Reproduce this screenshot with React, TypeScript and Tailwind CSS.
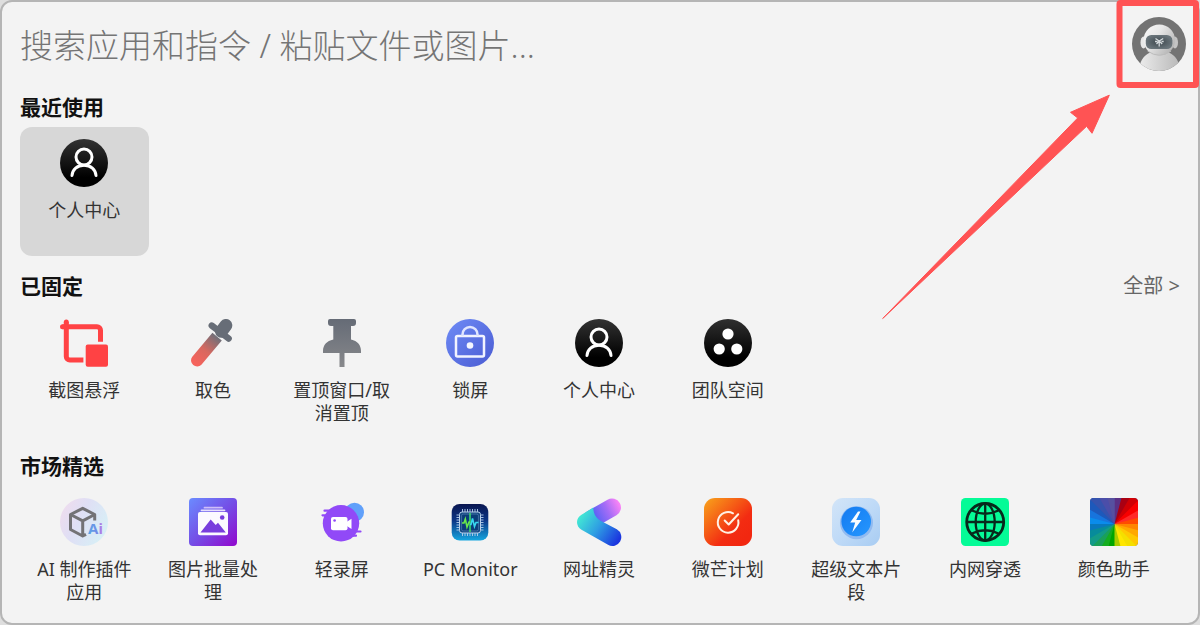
import type { ReactNode } from "react";

type AppItem = { name: string; icon: ReactNode };

function Svg({ children }: { children: ReactNode }) {
  return (
    <svg viewBox="0 0 48 48" className="size-12 shrink-0" fill="none" aria-hidden="true">
      {children}
    </svg>
  );
}

function UserIcon({ id }: { id: string }) {
  return (
    <Svg>
      <linearGradient id={id} x1="0" y1="0" x2="0" y2="1">
        <stop stopColor="#333" />
        <stop offset="0.8" stopColor="#000" />
      </linearGradient>
      <circle cx="24" cy="24" r="24" fill={`url(#${id})`} />
      <g stroke="#fff" strokeWidth="3" strokeLinecap="round">
        <circle cx="24" cy="18" r="8" />
        <path d="M12 36.5C12.4 30.5 17.2 26.2 24 26.2s11.6 4.3 12 10.3" />
      </g>
    </Svg>
  );
}

function CropIcon() {
  return (
    <Svg>
      <g stroke="#ff4244" strokeWidth="5">
        <path d="M2.5 7.7H37a3.5 3.5 0 0 1 3.5 3.5v11.6" />
        <path d="M6.3 3v34.5a3.5 3.5 0 0 0 3.5 3.5h13.6" />
      </g>
      <circle cx="2.5" cy="7.7" r="2.5" fill="#ff4244" />
      <circle cx="6.3" cy="3" r="2.5" fill="#ff4244" />
      <rect x="25.7" y="25.5" width="22.3" height="22.3" rx="2" fill="#ff4244" />
    </Svg>
  );
}

function DropperIcon() {
  return (
    <Svg>
      <linearGradient id="dropper" gradientUnits="userSpaceOnUse" x1="29" y1="17" x2="7" y2="44">
        <stop stopColor="#6a707a" />
        <stop offset="0.55" stopColor="#d8685f" />
        <stop offset="1" stopColor="#f5635c" />
      </linearGradient>
      <path d="M23.4 13.8 32.8 21.6 12.4 45.8A6.1 6.1 0 0 1 3.1 38Z" fill="url(#dropper)" />
      <path d="m22.8 6.6 16.8 12.9" stroke="#676d77" strokeWidth="6.5" strokeLinecap="round" />
      <path d="m36.9 6.4-4.5 6" stroke="#676d77" strokeWidth="12.8" strokeLinecap="round" />
    </Svg>
  );
}

function PinIcon() {
  return (
    <Svg>
      <linearGradient id="pin" x1="0" y1="0" x2="0" y2="1">
        <stop stopColor="#656b76" />
        <stop offset="1" stopColor="#87888b" />
      </linearGradient>
      <path
        d="M12 0h24a2 2 0 0 1 2 2v2a3 3 0 0 1-3 3h-2v13.5c6.5 1.5 10 5.5 10 11.5v2H26.5v14h-5V34H5v-2c0-6 3.8-10 10.3-11.500V7H13a3 3 0 0 1-3-3V2a2 2 0 0 1 2-2Z"
        fill="url(#pin)"
      />
    </Svg>
  );
}

function LockIcon() {
  return (
    <Svg>
      <linearGradient id="lock" x1="0" y1="0" x2="1" y2="1">
        <stop stopColor="#6e8bf6" />
        <stop offset="1" stopColor="#4a5bd2" />
      </linearGradient>
      <circle cx="24" cy="24" r="24" fill="url(#lock)" />
      <rect x="10" y="17" width="28" height="20.5" rx="1.5" stroke="#f1f3ff" strokeWidth="2.5" />
      <path d="M16.5 17v-1.5a7.5 7.5 0 0 1 15 0V17" stroke="#dfe5ff" strokeWidth="2.5" />
      <circle cx="24" cy="26.5" r="3.3" fill="#f4f6ff" />
    </Svg>
  );
}

function TeamIcon() {
  return (
    <Svg>
      <linearGradient id="team" x1="0" y1="0" x2="0" y2="1">
        <stop stopColor="#303030" />
        <stop offset="0.8" stopColor="#000" />
      </linearGradient>
      <circle cx="24" cy="24" r="24" fill="url(#team)" />
      <g fill="#fff">
        <circle cx="24" cy="15" r="5.6" />
        <circle cx="15.2" cy="30" r="5.6" />
        <circle cx="32.8" cy="30" r="5.6" />
      </g>
    </Svg>
  );
}

function AiBoxIcon() {
  return (
    <Svg>
      <linearGradient id="aiBg" x1="0" y1="0" x2="1" y2="0.5">
        <stop stopColor="#f2dcec" />
        <stop offset="0.5" stopColor="#dfdff5" />
        <stop offset="1" stopColor="#d8eef6" />
      </linearGradient>
      <linearGradient id="aiText" x1="0" y1="0" x2="1" y2="0">
        <stop stopColor="#58a6e4" />
        <stop offset="0.6" stopColor="#718ce8" />
        <stop offset="1" stopColor="#c57be4" />
      </linearGradient>
      <circle cx="24" cy="24" r="24" fill="url(#aiBg)" />
      <path
        d="M34.7 22.5V16.5L22.7 10.3 10.5 16.5V31.5L22.7 38l3.3-1.7M10.5 16.5l12.2 6.3 12-6.3M22.7 22.8V38"
        stroke="#737276"
        strokeWidth="3"
        strokeLinejoin="round"
      />
      <text x="28" y="36" fontSize="15" fontWeight="700" fontFamily="Noto Sans, sans-serif" fill="url(#aiText)">
        Ai
      </text>
    </Svg>
  );
}

function PictureIcon() {
  return (
    <Svg>
      <linearGradient id="picture" x1="0" y1="0" x2="1" y2="1">
        <stop stopColor="#6b8cff" />
        <stop offset="0.5" stopColor="#744ee6" />
        <stop offset="1" stopColor="#9206cd" />
      </linearGradient>
      <rect width="48" height="48" rx="4" fill="url(#picture)" />
      <path d="M15.5 9.7h17.5" stroke="#cdbef8" strokeWidth="1.8" strokeLinecap="round" />
      <path d="M12.5 12.3h23" stroke="#e6dffc" strokeWidth="1.8" strokeLinecap="round" />
      <rect x="9" y="14" width="30" height="23.3" rx="2" fill="#fbf9ff" />
      <path d="m11.5 34.5 10.2-13 5 5.5 2.3-2.2 7.8 9.7Z" fill="#783ddd" />
      <circle cx="33.2" cy="19.5" r="2.3" fill="#783ddd" />
    </Svg>
  );
}

function RecorderIcon() {
  return (
    <Svg>
      <circle cx="36.5" cy="14.3" r="9.5" fill="#60a0fa" />
      <circle cx="23" cy="25.3" r="18.2" fill="#9149f7" />
      <path
        d="M6.5 12.7h5M4.5 17.3h5M36 33.5h6.5M34 37.7h4"
        stroke="#9149f7"
        strokeWidth="2.2"
        strokeLinecap="round"
      />
      <rect x="13" y="19" width="16.5" height="13.3" rx="2" fill="#fff" />
      <path d="m28.5 24 5-3.3V31l-5-3.3Z" fill="#fff" />
      <circle cx="16.6" cy="22.5" r="1.3" fill="#9149f7" />
    </Svg>
  );
}

function MonitorIcon() {
  return (
    <Svg>
      <linearGradient id="monitor" x1="0" y1="0" x2="0" y2="1">
        <stop stopColor="#0a1650" />
        <stop offset="0.45" stopColor="#0b3585" />
        <stop offset="1" stopColor="#15a6df" />
      </linearGradient>
      <rect x="5.7" y="6" width="36.6" height="36.6" rx="8" fill="url(#monitor)" />
      <g stroke="#b6cfea" strokeWidth="0.9">
        <path d="M16.500 14v-3m2.500 3v-3m2.500 3v-3m2.500 3v-3m2.500 3v-3m2.500 3v-3m2.500 3v-3M16.500 35v3m2.500-3v3m2.500-3v3m2.500-3v3m2.500-3v3m2.500-3v3m2.500-3v3" />
        <path d="M13.500 17h-3m3 2.500h-3m3 2.500h-3m3 2.500h-3m3 2.500h-3m3 2.500h-3m3 2.500h-3M34.500 17h3m-3 2.500h3m-3 2.500h3m-3 2.500h3m-3 2.500h3m-3 2.500h3m-3 2.500h3" />
      </g>
      <rect x="13.5" y="14" width="21" height="21" rx="2.5" fill="#154781" stroke="#b6cfea" strokeWidth="1" />
      <rect x="15.6" y="16.1" width="16.8" height="16.8" rx="1.5" fill="#0b3c78" stroke="#719bc8" strokeWidth="0.5" />
      <path d="M24 15v19" stroke="#39d96d" strokeWidth="1.6" />
      <path d="M16 25h2l1.3-4 1.7 8 2-5h1" stroke="#69e94b" strokeWidth="1.6" />
      <path d="M24 26.5h1l1.5-6 2 8 1.5-4h2.5" stroke="#39d6ee" strokeWidth="1.6" />
    </Svg>
  );
}

function ArrowFoldIcon() {
  return (
    <Svg>
      <linearGradient id="foldTop" gradientUnits="userSpaceOnUse" x1="20" y1="18" x2="45" y2="5">
        <stop stopColor="#5b61f5" />
        <stop offset="0.5" stopColor="#a56df6" />
        <stop offset="1" stopColor="#ff85f7" />
      </linearGradient>
      <linearGradient id="foldLow" gradientUnits="userSpaceOnUse" x1="4" y1="16" x2="43" y2="43">
        <stop stopColor="#44efd3" />
        <stop offset="0.5" stopColor="#2e9de3" />
        <stop offset="1" stopColor="#1b35df" />
      </linearGradient>
      <path d="M37 9.5 16 21.5" stroke="url(#foldTop)" strokeWidth="18" strokeLinecap="round" />
      <path
        d="M18.2 9.6C18.5 16 21 21 28.5 24.2L41.8 31.3A8.9 8.9 0 0 1 33 46.8L6.5 31.8Q2 29 2 24.3T6.5 16.8Z"
        fill="url(#foldLow)"
      />
    </Svg>
  );
}

function PlanIcon() {
  return (
    <Svg>
      <linearGradient id="plan" x1="0" y1="0" x2="0.85" y2="0.85">
        <stop stopColor="#f8a51b" />
        <stop offset="0.75" stopColor="#f32c12" />
        <stop offset="1" stopColor="#f22710" />
      </linearGradient>
      <rect width="48" height="48" rx="11" fill="url(#plan)" />
      <g stroke="#fff1e5" strokeWidth="2" strokeLinecap="round" strokeLinejoin="round">
        <path d="M29 15.3a10.3 10.3 0 1 0 5.2 7" />
        <path d="m20.7 22.5 4 4 9.500-10.2" />
      </g>
    </Svg>
  );
}

function BoltIcon() {
  return (
    <Svg>
      <linearGradient id="boltBg" x1="0" y1="0" x2="1" y2="1">
        <stop stopColor="#d3e5f8" />
        <stop offset="0.55" stopColor="#bdd9f7" />
        <stop offset="1" stopColor="#a8ccf2" />
      </linearGradient>
      <linearGradient id="boltFace" x1="0" y1="0" x2="1" y2="1">
        <stop stopColor="#147af0" />
        <stop offset="1" stopColor="#2697ff" />
      </linearGradient>
      <rect width="48" height="48" rx="11" fill="url(#boltBg)" />
      <circle cx="24.5" cy="24.7" r="16.5" fill="#91baf0" />
      <circle cx="24.2" cy="23.5" r="14.8" fill="url(#boltFace)" />
      <path d="m26 13.5-7.8 11h5l-3 10L29.5 22h-5.3l4.3-8.5Z" fill="#fafdff" />
    </Svg>
  );
}

function GlobeIcon() {
  return (
    <Svg>
      <rect width="48" height="48" rx="4.5" fill="#05fb97" />
      <g stroke="#07291c" strokeWidth="2.3">
        <circle cx="24.2" cy="24" r="18.5" strokeWidth="2.8" />
        <ellipse cx="24.2" cy="24" rx="9.5" ry="18.5" />
        <path d="M24.2 5.5v37M5.7 24h37M11 12.5q13.2 6.5 26.4 0M11 35.5q13.2-6.5 26.4 0" />
      </g>
    </Svg>
  );
}

const wheel = [
  "#5b3085", "#a90012", "#cf0004", "#f80000", "#ff2929", "#ff4b00",
  "#ff8500", "#ffa800", "#ffc800", "#f4df00", "#ffe600", "#a8cc00",
  "#00a500", "#15ad20", "#1aa05a", "#139a88", "#078b9b", "#0878bd",
  "#0a8cec", "#1774dd", "#1d59bb", "#3553ae", "#4b4ea9", "#5650a0",
];

// Each wedge runs under the next one, so no seam shows between them.
function wedge(index: number) {
  const step = (Math.PI * 2) / wheel.length;
  const point = (angle: number) => `${24.5 + 40 * Math.sin(angle)} ${26 - 40 * Math.cos(angle)}`;
  const overlap = index === wheel.length - 1 ? 0 : step / 2;
  return `M24.5 26L${point(index * step)}L${point((index + 1) * step + overlap)}Z`;
}

function ColorWheelIcon() {
  return (
    <Svg>
      <clipPath id="wheelClip">
        <rect width="48" height="48" rx="4" />
      </clipPath>
      <g clipPath="url(#wheelClip)">
        <rect width="48" height="48" fill="#5650a0" />
        {wheel.map((color, i) => (
          <path key={color} d={wedge(i)} fill={color} />
        ))}
      </g>
    </Svg>
  );
}

function Avatar() {
  return (
    <svg viewBox="0 0 54 54" className="size-[54px]" fill="none" aria-hidden="true">
      <clipPath id="avatarClip">
        <circle cx="27" cy="27" r="27" />
      </clipPath>
      <linearGradient id="robot" x1="0" y1="0" x2="1" y2="0.7">
        <stop stopColor="#fafafa" />
        <stop offset="0.45" stopColor="#e7e7e7" />
        <stop offset="1" stopColor="#b4b4b4" />
      </linearGradient>
      <linearGradient id="robotBody" x1="0" y1="0" x2="1" y2="0">
        <stop stopColor="#ececec" />
        <stop offset="1" stopColor="#b8b8b8" />
      </linearGradient>
      <radialGradient id="visor">
        <stop stopColor="#3d474d" />
        <stop offset="1" stopColor="#69747a" />
      </radialGradient>
      <g clipPath="url(#avatarClip)">
        <rect width="54" height="54" fill="#737373" />
        <path d="M7 54c0-9 5-16 11-18.500h19C43 38 48 45 48 54Z" fill="url(#robotBody)" />
        <ellipse cx="11.5" cy="25.5" rx="3" ry="6" fill="#e8e8e8" />
        <ellipse cx="43" cy="25.5" rx="3" ry="6" fill="#c4c4c4" />
        <ellipse cx="27.3" cy="23" rx="15.7" ry="15.5" fill="url(#robot)" />
        <path d="M15.5 34q11.8 8.5 23.6 0" stroke="#bcbcbc" strokeWidth="1" />
        <rect x="13.8" y="18" width="26.6" height="14" rx="5.5" fill="url(#visor)" />
        <path
          d="M23.5 21.5l3.7 2.5 4-2.5M24.5 27l2.7-3 3 3M27.2 24v5.5M23 24.5h2.5M29.5 24.5h2.2"
          stroke="#d5dadd"
          strokeWidth="1.3"
        />
      </g>
    </svg>
  );
}

const recent: AppItem[] = [{ name: "个人中心", icon: <UserIcon id="userRecent" /> }];

const pinned: AppItem[] = [
  { name: "截图悬浮", icon: <CropIcon /> },
  { name: "取色", icon: <DropperIcon /> },
  { name: "置顶窗口/取消置顶", icon: <PinIcon /> },
  { name: "锁屏", icon: <LockIcon /> },
  { name: "个人中心", icon: <UserIcon id="userPinned" /> },
  { name: "团队空间", icon: <TeamIcon /> },
];

const market: AppItem[] = [
  { name: "AI 制作插件应用", icon: <AiBoxIcon /> },
  { name: "图片批量处理", icon: <PictureIcon /> },
  { name: "轻录屏", icon: <RecorderIcon /> },
  { name: "PC Monitor", icon: <MonitorIcon /> },
  { name: "网址精灵", icon: <ArrowFoldIcon /> },
  { name: "微芒计划", icon: <PlanIcon /> },
  { name: "超级文本片段", icon: <BoltIcon /> },
  { name: "内网穿透", icon: <GlobeIcon /> },
  { name: "颜色助手", icon: <ColorWheelIcon /> },
];

function Section({
  title,
  items,
  selected = -1,
  action,
}: {
  title: string;
  items: AppItem[];
  selected?: number;
  action?: ReactNode;
}) {
  return (
    <section className="px-[18px]">
      <div className="flex h-[51px] items-center justify-between pt-2.5">
        <h2 className="text-[21px] leading-7 font-bold text-[#111]">{title}</h2>
        {action}
      </div>
      <ul className="grid grid-cols-9 pr-0.5">
        {items.map((item, i) => (
          <li key={item.name} className="aspect-square">
            <button
              type="button"
              className={
                i === selected
                  ? "flex size-full flex-col items-center rounded-xl bg-[#d7d7d7] px-3 pt-3"
                  : "flex size-full flex-col items-center rounded-xl px-3 pt-3 hover:bg-[#e6e6e6]"
              }
            >
              {item.icon}
              <span className="mt-3 text-[18px] leading-[23px] text-[#333]">{item.name}</span>
            </button>
          </li>
        ))}
      </ul>
    </section>
  );
}

export default function App() {
  return (
    <div className="relative bg-[#dedede] font-['Noto_Sans','Noto_Sans_CJK_SC',sans-serif]">
      <main
        lang="zh-CN"
        className="min-h-screen rounded-xl border-2 border-[#b5b5b5] bg-[#f3f3f3]"
      >
        <header className="flex h-[74px] items-center gap-6 pt-2.5 pr-3 pl-[18px]">
          <input
            type="text"
            aria-label="搜索应用和指令"
            placeholder="搜索应用和指令 / 粘贴文件或图片..."
            className="h-14 min-w-0 flex-1 bg-transparent pt-0.5 text-[33px] font-light text-[#333] outline-none placeholder:text-[#757575]"
          />
          <button type="button" aria-label="个人中心" className="rounded-full">
            <Avatar />
          </button>
        </header>

        <Section title="最近使用" items={recent} selected={0} />
        <Section
          title="已固定"
          items={pinned}
          action={
            <a href="#all" className="text-[20px] leading-7 text-[#666]">
              全部 &gt;
            </a>
          }
        />
        <Section title="市场精选" items={market} />
      </main>

      <svg
        viewBox="880 0 320 320"
        className="pointer-events-none absolute top-0 right-0 h-80 w-80"
        fill="none"
        aria-hidden="true"
      >
        <rect x="1119.5" y="3" width="76.5" height="82" rx="1" stroke="#ff5354" strokeWidth="6" />
        <path
          d="M882.7 318.5 1077.7 118 1070.5 112.3 1109.3 95.2 1092 133.3 1086.6 126.3Z"
          fill="#ff5354"
          stroke="#ff5354"
          strokeWidth="1"
          strokeLinejoin="round"
        />
      </svg>
    </div>
  );
}
